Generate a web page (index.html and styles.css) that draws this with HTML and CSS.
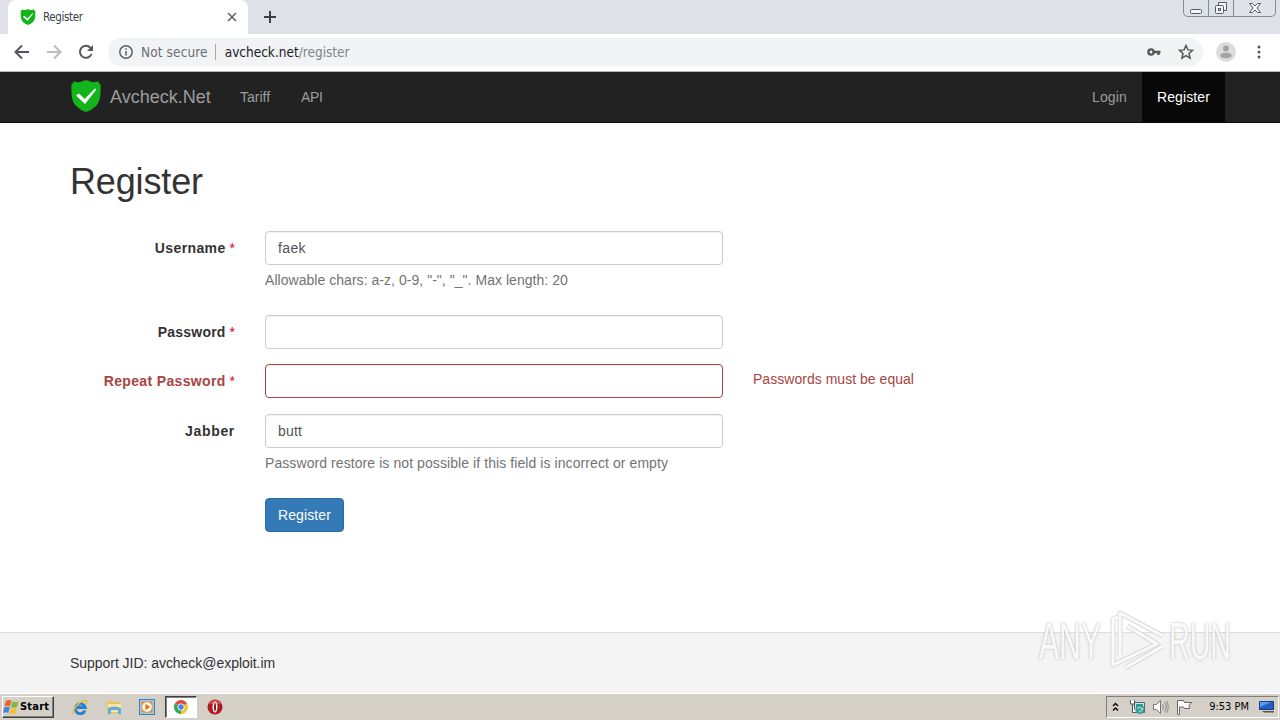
FILE: index.html
```html
<!DOCTYPE html>
<html lang="en">
<head>
    <meta charset="UTF-8">
    <title>Register</title>
    <link rel="stylesheet" href="styles.css">
</head>
<body>
    <div class="tabstrip">
        <div class="tab">
            <svg class="favicon" viewBox="0 0 30 32"><use href="#shield"/></svg>
            <span class="tab-title">Register</span>
            <svg class="tab-close" viewBox="0 0 10 10"><path d="M1 1l8 8M9 1l-8 8"/></svg>
        </div>
        <svg class="new-tab" viewBox="0 0 12 12"><path d="M6 0v12M0 6h12"/></svg>
        <div class="window-buttons">
            <span><svg width="14" height="14" viewBox="0 0 14 14"><rect x="1.5" y="8.5" width="11" height="4" rx="1"/></svg></span>
            <span><svg width="14" height="14" viewBox="0 0 14 14"><path d="M4.5 4.5v-3h8v8h-3"/><rect x="1.5" y="4.5" width="8" height="8" rx="1"/><rect x="4.5" y="7.5" width="2" height="2"/></svg></span>
            <span><svg width="14" height="14" viewBox="0 0 14 14"><path d="M1.5 2.5h3l2.500 2.500 2.500-2.500h3l-3.500 4.500 3.500 4.500h-3l-2.500-2.500-2.500 2.500h-3l3.500-4.500z"/></svg></span>
        </div>
    </div>

    <div class="toolbar">
        <svg class="tool" viewBox="0 0 16 16"><path d="M15 8H2M8 1.500L1.500 8 8 14.500"/></svg>
        <svg class="tool disabled" viewBox="0 0 16 16"><path d="M1 8h13M8 1.500L14.500 8 8 14.500"/></svg>
        <svg class="tool" viewBox="0 0 16 16"><path d="M13.500 10A6 6 0 1 1 12.300 3.700L14 5.500"/><path class="solid" d="M15 1v6H9z"/></svg>
        <div class="address">
            <svg class="info" viewBox="0 0 14 14"><circle cx="7" cy="7" r="6.200"/><path d="M7 6v4.500M7 3.300v1.500"/></svg>
            <span class="insecure">Not secure</span>
            <span class="divider"></span>
            <span class="url"><b>avcheck.net</b>/register</span>
            <svg class="key" viewBox="0 0 14 8"><circle cx="4" cy="4" r="2.600"/><path d="M6.500 4h7M11.500 4v3"/></svg>
            <svg class="star" viewBox="0 0 16 16"><path d="M8 1.500l1.900 4.400 4.700.4-3.600 3.100 1.100 4.700L8 11.600l-4.100 2.500L5 9.400 1.400 6.300l4.700-.4z"/></svg>
        </div>
        <svg class="profile" viewBox="0 0 20 20"><circle cx="10" cy="10" r="10" fill="#dcdcdc"/><circle cx="10" cy="6.500" r="3" fill="#a3a3a3"/><ellipse cx="10" cy="13.500" rx="5.700" ry="2.800" fill="#a3a3a3"/></svg>
        <svg class="menu" viewBox="0 0 4 14"><circle cx="2" cy="2" r="1.500"/><circle cx="2" cy="7" r="1.500"/><circle cx="2" cy="12" r="1.500"/></svg>
    </div>

    <nav class="navbar">
        <svg class="logo" viewBox="0 0 30 32">
            <g id="shield">
                <path fill="#13b51c" d="M3 1.200Q7 3 11 1.400Q15-.8 19 1.400Q23 3 27 1.200Q27.500 3 29.500 4.500Q30.500 21 25 26Q21 30 15 32Q9 30 5 26Q-.5 21 .5 4.500Q2.500 3 3 1.200z"/>
                <path fill="#fff" d="M5 15.500l3-2 5.700 5.500L24 8.500l1.300 1L14 24z"/>
            </g>
        </svg>
        <a class="brand">Avcheck.Net</a>
        <a class="tariff">Tariff</a>
        <a class="api">API</a>
        <a class="login">Login</a>
        <a class="active">Register</a>
    </nav>

    <main class="page">
        <h1>Register</h1>
        <form class="form">
            <div class="row">
                <label><span class="l-user">Username</span> <i>*</i></label>
                <div class="field">
                    <div class="input v-user">faek</div>
                    <p class="help h-user">Allowable chars: a-z, 0-9, "-", "_". Max length: 20</p>
                </div>
            </div>
            <div class="row">
                <label><span class="l-pass">Password</span> <i>*</i></label>
                <div class="field"><div class="input"></div></div>
            </div>
            <div class="row has-error">
                <label><span class="l-repeat">Repeat Password</span> <i>*</i></label>
                <div class="field"><div class="input"></div></div>
                <div class="error">Passwords must be equal</div>
            </div>
            <div class="row">
                <label><span class="l-jabber">Jabber</span></label>
                <div class="field">
                    <div class="input v-jabber">butt</div>
                    <p class="help h-jabber">Password restore is not possible if this field is incorrect or empty</p>
                </div>
            </div>
            <button type="button" class="btn">Register</button>
        </form>
    </main>

    <footer class="footer">Support JID: avcheck@exploit.im</footer>

    <div class="taskbar">
        <div class="start">
            <svg width="17" height="16" viewBox="0 0 17 16">
                <path fill="#e8642c" d="M3 2q3-2 5.500 0L7 7.500Q4.500 6 1.500 7.500z"/>
                <path fill="#7cb83c" d="M9.500 2.500q3 1.500 6 0L14 8q-3 1.500-6 0z"/>
                <path fill="#3f86d8" d="M1.300 8.500q3-1.500 5.500 0L5.300 14q-2.800-1.600-5.300 0z"/>
                <path fill="#f5c02e" d="M7.800 9q3 1.500 6 0l-1.500 5.500q-3 1.500-6 0z"/>
            </svg>
            <span>Start</span>
        </div>
        <div class="launch">
            <svg viewBox="0 0 16 16"><path fill="none" stroke="#2383d2" stroke-width="3" d="M13 11.500A5 5 0 1 1 13.200 8.500H5"/><path fill="none" stroke="#e9bd36" stroke-width="1.500" d="M2 14.500C-1 13 6 2.500 13 1.500c3-.3 2 2 1 3.500"/></svg>
        </div>
        <div class="launch">
            <svg viewBox="0 0 16 16"><path fill="#e8c75c" d="M1 2h5l1 1h7v11H1z"/><path fill="#f9e7a0" d="M2 5h13v8H2z"/><path fill="#62aeda" d="M2 9q6-3 13 0v6h-3v-4H5v4H2z"/></svg>
        </div>
        <div class="launch">
            <svg viewBox="0 0 16 16"><rect x=".5" y=".5" width="15" height="15" fill="#9bcaf0" stroke="#3c7fc0"/><rect x="2.500" y="2.500" width="11" height="11" rx="1" fill="#f18b20"/><circle cx="8" cy="8" r="4.800" fill="#fff"/><path fill="#e87412" d="M6.300 4.700L11.500 8l-5.200 3.300z"/></svg>
        </div>
        <div class="launch running">
            <svg viewBox="0 0 16 16"><path fill="#df4a3c" d="M8 8L1.900 4.500A7 7 0 0 1 14.100 4.500z"/><path fill="#35a853" d="M8 8v7A7 7 0 0 1 1.900 4.500z"/><path fill="#f7c62f" d="M8 8l6.100-3.500A7 7 0 0 1 8 15z"/><circle cx="8" cy="8" r="3.500" fill="#fff"/><circle cx="8" cy="8" r="2.700" fill="#4286ee"/></svg>
        </div>
        <div class="launch">
            <svg viewBox="0 0 16 16"><circle cx="8" cy="8" r="7.500" fill="#b51820"/><path fill="#d8484a" d="M2 5a6.500 6.500 0 0 1 12 0z"/><ellipse cx="8" cy="8" rx="2.500" ry="5.500" fill="#fff"/><ellipse cx="8" cy="8" rx="1" ry="4.300" fill="#81181c"/></svg>
        </div>
        <div class="tray">
            <svg class="chevrons" viewBox="0 0 7 10"><path d="M1 4l2.500-2.500L6 4M1 8.500L3.500 6 6 8.500"/></svg>
            <svg class="net" viewBox="0 0 17 16"><path fill="#cde2e4" stroke="#426b70" d="M5.500 3.500h10v10h-10z"/><path fill="#2d9c91" d="M7 5h7v6H7z"/><circle cx="11" cy="10.500" r="4.500" fill="#3b9f9c"/><path fill="none" stroke="#c6ecdf" d="M8.500 9q3-2 5.500 2M10 13q3-1 4-4"/><path fill="#fff" stroke="#555" d="M1.500 1v4h4V1M3.500 5v8.500h3"/></svg>
            <svg class="sound" viewBox="0 0 17 16"><path fill="#fff" stroke="#777" d="M1.500 5.500h3l4-4v13l-4-4h-3z"/><path fill="none" stroke="#888" d="M10.500 5.500q2 2.500 0 5M12.500 3.500q3.500 4.500 0 9M14.500 2q3.500 6 0 12"/></svg>
            <svg class="flag" viewBox="0 0 17 16"><path fill="#fff" stroke="#666" d="M1.500 15.500V1.500h6l1 2h7l-2.500 3 .5 3h-5l-1-1.500h-4v7.500z"/></svg>
            <span class="clock">9:53 PM</span>
            <svg class="desktop" viewBox="0 0 16 14"><path fill="#235fc0" stroke="#173f80" d="M.5 1.500h14v8H.5z"/><path fill="#5a9ceb" d="M1 2h11L1 7z"/><path fill="#555" d="M3 11h12v1.500H5z"/></svg>
        </div>
    </div>

    <div class="watermark">
        <span class="wm-text">ANY</span>
        <svg width="62" height="64" viewBox="0 0 62 64">
            <path class="wm-edge" d="M13 46V4l43 23M20 17l30 18L6 56V10l5-2M18 59l38-22"/>
            <path class="wm-line" d="M13 46V4l43 23M20 17l30 18L6 56V10l5-2M18 59l38-22"/>
        </svg>
        <span class="wm-text wm-run">RUN</span>
    </div>
</body>
</html>
```

FILE: styles.css
```css
* {
    box-sizing: border-box;
}

body {
    margin: 0;
    width: 1280px;
    height: 720px;
    overflow: hidden;
    position: relative;
    display: flex;
    flex-direction: column;
    background: #fff;
    color: #333;
    font: 14px/20px "Liberation Sans", Arial, sans-serif;
    white-space: nowrap;
}

svg {
    display: block;
    flex: none;
}

.tabstrip {
    height: 34px;
    flex: none;
    display: flex;
    align-items: center;
    background: #dee1e8;
    padding-left: 8px;
}

.tab {
    width: 240px;
    height: 34px;
    padding: 0 11px 0 12px;
    display: flex;
    align-items: center;
    background: #fff;
    border-radius: 8px 8px 0 0;
}

.favicon {
    width: 16px;
    height: 16px;
}

.tab-title {
    margin-left: 7px;
    font: 11.5px "DejaVu Sans Condensed", "DejaVu Sans", sans-serif;
    letter-spacing: -0.38px;
    color: #3c4043;
}

.tab-close {
    width: 10px;
    height: 10px;
    margin-left: auto;
    stroke: #5f6368;
    stroke-width: 1.6;
}

.new-tab {
    width: 12px;
    height: 12px;
    margin-left: 16px;
    stroke: #3c4043;
    stroke-width: 2;
}

.window-buttons {
    display: flex;
    align-self: flex-start;
    width: 93px;
    height: 17px;
    margin: 0 4px 0 auto;
    border: 1px solid #858a94;
    border-top: 0;
    border-radius: 0 0 5px 5px;
}

.window-buttons span {
    width: 25px;
    display: flex;
    justify-content: center;
    align-items: center;
    border-right: 1px solid #858a94;
}

.window-buttons span:last-child {
    flex: 1;
    border: 0;
}

.window-buttons svg {
    fill: #f4f5f7;
    stroke: #555b66;
}

.toolbar {
    height: 38px;
    flex: none;
    display: flex;
    align-items: center;
    padding: 0 19px 1px 14px;
    border-bottom: 1px solid #b5b8bc;
}

.tool {
    width: 16px;
    height: 16px;
    margin-right: 16px;
    fill: none;
    stroke: #54575b;
    stroke-width: 2;
}

.disabled {
    stroke: #b9bbbe;
}

.solid {
    fill: #54575b;
    stroke: none;
}

.address {
    flex: 1;
    height: 28px;
    margin-left: -2px;
    padding: 0 9px 0 11px;
    display: flex;
    align-items: center;
    border-radius: 14px;
    background: #f1f3f4;
    font: 13.5px "DejaVu Sans Condensed", "DejaVu Sans", sans-serif;
}

.info {
    width: 14px;
    height: 14px;
    fill: none;
    stroke: #5f6368;
    stroke-width: 1.5;
}

.insecure {
    margin-left: 8px;
    letter-spacing: 0.12px;
    color: #6a6e73;
}

.divider {
    width: 1px;
    height: 16px;
    margin: 0 9px 0 7px;
    background: #a5a8ac;
}

.url {
    color: #80868b;
}

.url b {
    font-weight: normal;
    color: #202124;
}

.key {
    width: 14px;
    height: 8px;
    margin-left: auto;
    fill: none;
    stroke: #54575b;
    stroke-width: 2.4;
}

.star {
    width: 16px;
    height: 16px;
    margin-left: 17px;
    fill: none;
    stroke: #54575b;
    stroke-width: 1.5;
}

.profile {
    width: 20px;
    height: 20px;
    margin-left: 13px;
}

.menu {
    width: 4px;
    height: 14px;
    margin-left: 21px;
    fill: #54575b;
}

.navbar {
    height: 51px;
    flex: none;
    display: flex;
    align-items: center;
    padding: 0 55px 0 71px;
    background: #222;
    border-bottom: 1px solid #080808;
    color: #9d9d9d;
}

.logo {
    width: 30px;
    height: 32px;
    margin-top: -2px;
}

.brand {
    width: 100px;
    margin-left: 9px;
    font-size: 18px;
}

.tariff {
    width: 31px;
    margin-left: 30px;
}

.api {
    margin-left: 30px;
    letter-spacing: -0.4px;
}

.login {
    margin: 0 15px 0 auto;
    letter-spacing: 0.15px;
}

.active {
    width: 83px;
    height: 50px;
    padding: 15px;
    background: #080808;
    color: #fff;
    letter-spacing: 0.1px;
}

.page {
    height: 509px;
    flex: none;
    padding: 39px 70px 0;
}

h1 {
    margin: 0 0 29px;
    font-size: 36px;
    line-height: 40px;
    font-weight: normal;
    letter-spacing: -0.15px;
}

.row {
    display: flex;
    margin-bottom: 15px;
}

label {
    width: 165px;
    margin-right: 30px;
    padding-top: 7px;
    text-align: right;
    font-weight: bold;
}

label i {
    font-style: normal;
    font-weight: normal;
    color: #e00022;
}

.l-user {
    letter-spacing: 0.4px;
}

.l-pass {
    letter-spacing: 0.23px;
}

.l-repeat {
    letter-spacing: 0.35px;
}

.l-jabber {
    letter-spacing: 0.68px;
}

.field {
    width: 458px;
}

.input {
    height: 34px;
    padding: 6px 12px;
    border: 1px solid #ccc;
    border-radius: 4px;
    box-shadow: inset 0 1px 1px rgba(0, 0, 0, 0.06);
    color: #555;
}

.v-user {
    letter-spacing: 0.38px;
}

.v-jabber {
    letter-spacing: 0.16px;
}

.help {
    margin: 5px 0 10px;
    color: #737373;
}

.h-user {
    letter-spacing: 0.04px;
}

.h-jabber {
    letter-spacing: 0.08px;
}

.has-error {
    height: 35px;
    color: #a94442;
}

.has-error .input {
    border-color: #a94442;
}

.error {
    margin: 5px 0 0 30px;
    letter-spacing: 0.03px;
}

.btn {
    display: block;
    width: 79px;
    height: 34px;
    margin-left: 195px;
    padding: 0 12px;
    border: 1px solid #2e6da4;
    border-radius: 4px;
    background: #337ab7;
    color: #fff;
    font: inherit;
    letter-spacing: 0.11px;
}

.footer {
    height: 61px;
    flex: none;
    padding: 20px 70px;
    background: #f4f4f4;
    border-top: 1px solid #ddd;
    letter-spacing: -0.04px;
}

.taskbar {
    height: 27px;
    flex: none;
    display: flex;
    align-items: center;
    padding: 0 0 1px 2px;
    background: #d4d0c8;
    border-top: 1px solid #fff;
    color: #000;
}

.start {
    width: 52px;
    height: 22px;
    margin-right: 10px;
    display: flex;
    align-items: center;
    border: 1px solid;
    border-color: #fff #404040 #404040 #fff;
    box-shadow: inset -1px -1px #808080;
    font: bold 11px "DejaVu Sans Condensed", "DejaVu Sans", sans-serif;
    letter-spacing: 0.2px;
}

.launch {
    width: 32px;
    height: 22px;
    margin-right: 1.7px;
    display: flex;
    align-items: center;
    justify-content: center;
}

.launch svg {
    width: 16px;
    height: 16px;
}

.running {
    background: #fff;
    border: 1px solid;
    border-color: #404040 #fff #fff #404040;
    box-shadow: inset 1px 1px #808080;
}

.tray {
    width: 173px;
    height: 22px;
    margin: 0 1px 0 auto;
    padding: 0 3px 0 5px;
    display: flex;
    align-items: center;
    border: 1px solid;
    border-color: #808080 #fff #fff #808080;
}

.chevrons {
    width: 7px;
    height: 10px;
    fill: none;
    stroke: #000;
    stroke-width: 1.4;
}

.net,
.sound,
.flag {
    width: 17px;
    height: 16px;
}

.net {
    margin-left: 10px;
}

.sound {
    margin-left: 6px;
}

.flag {
    margin-left: 7px;
}

.clock {
    margin-left: auto;
    font: 11px "DejaVu Sans Condensed", "DejaVu Sans", sans-serif;
}

.desktop {
    width: 16px;
    height: 14px;
    margin-left: 10px;
}

/* translucent mark over the page and footer */
.watermark {
    position: absolute;
    left: 1039px;
    top: 608px;
    height: 66px;
    display: flex;
    align-items: center;
}

.wm-text {
    width: 68px;
    font: 52px/66px "Liberation Sans", Arial, sans-serif;
    color: #fafafa;
    text-shadow: 0 0 3px #aaa;
    transform: scaleX(0.58);
    transform-origin: left;
}

.wm-run {
    transform: scaleX(0.55);
}

.wm-edge,
.wm-line {
    fill: none;
    stroke: #dadada;
    stroke-width: 5;
    stroke-linejoin: round;
}

.wm-line {
    stroke: #fafafa;
    stroke-width: 3;
}
```
